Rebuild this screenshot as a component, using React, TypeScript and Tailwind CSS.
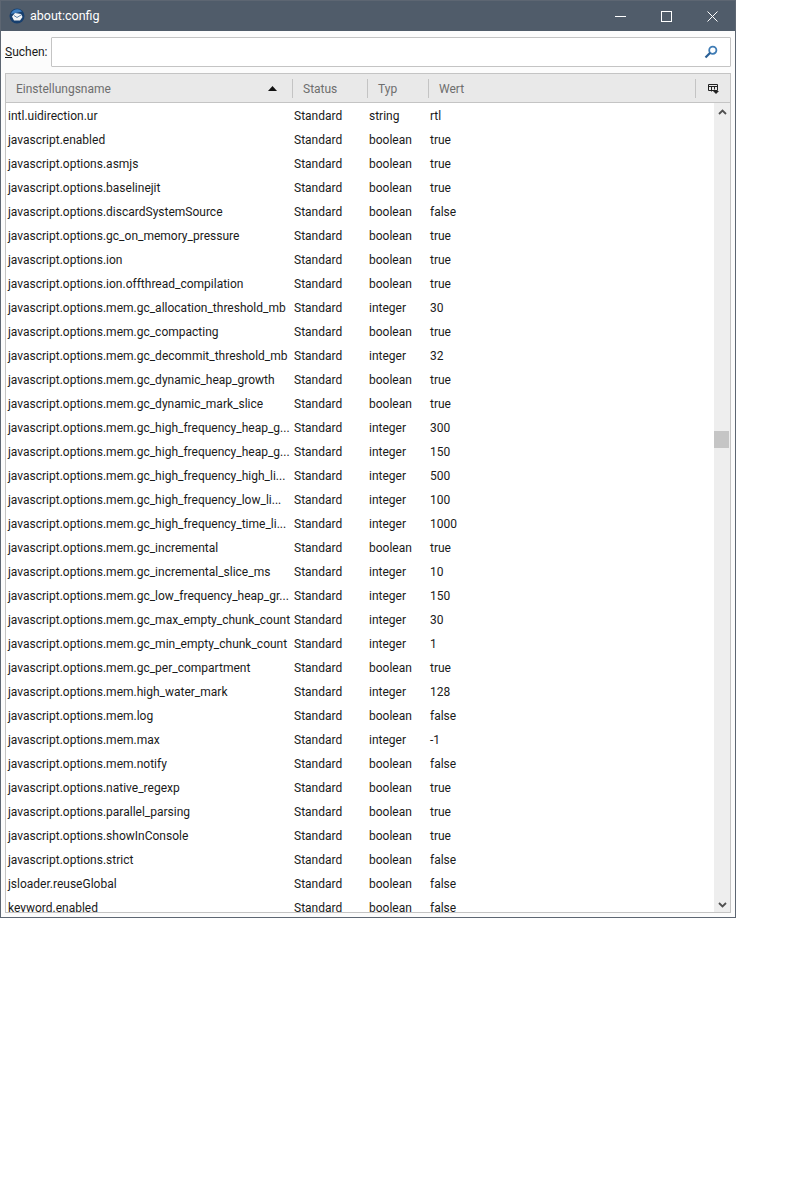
const rows: [string, string, string][] = [
  ["intl.uidirection.ur", "string", "rtl"],
  ["javascript.enabled", "boolean", "true"],
  ["javascript.options.asmjs", "boolean", "true"],
  ["javascript.options.baselinejit", "boolean", "true"],
  ["javascript.options.discardSystemSource", "boolean", "false"],
  ["javascript.options.gc_on_memory_pressure", "boolean", "true"],
  ["javascript.options.ion", "boolean", "true"],
  ["javascript.options.ion.offthread_compilation", "boolean", "true"],
  ["javascript.options.mem.gc_allocation_threshold_mb", "integer", "30"],
  ["javascript.options.mem.gc_compacting", "boolean", "true"],
  ["javascript.options.mem.gc_decommit_threshold_mb", "integer", "32"],
  ["javascript.options.mem.gc_dynamic_heap_growth", "boolean", "true"],
  ["javascript.options.mem.gc_dynamic_mark_slice", "boolean", "true"],
  ["javascript.options.mem.gc_high_frequency_heap_g...", "integer", "300"],
  ["javascript.options.mem.gc_high_frequency_heap_g...", "integer", "150"],
  ["javascript.options.mem.gc_high_frequency_high_li...", "integer", "500"],
  ["javascript.options.mem.gc_high_frequency_low_li...", "integer", "100"],
  ["javascript.options.mem.gc_high_frequency_time_li...", "integer", "1000"],
  ["javascript.options.mem.gc_incremental", "boolean", "true"],
  ["javascript.options.mem.gc_incremental_slice_ms", "integer", "10"],
  ["javascript.options.mem.gc_low_frequency_heap_gr...", "integer", "150"],
  ["javascript.options.mem.gc_max_empty_chunk_count", "integer", "30"],
  ["javascript.options.mem.gc_min_empty_chunk_count", "integer", "1"],
  ["javascript.options.mem.gc_per_compartment", "boolean", "true"],
  ["javascript.options.mem.high_water_mark", "integer", "128"],
  ["javascript.options.mem.log", "boolean", "false"],
  ["javascript.options.mem.max", "integer", "-1"],
  ["javascript.options.mem.notify", "boolean", "false"],
  ["javascript.options.native_regexp", "boolean", "true"],
  ["javascript.options.parallel_parsing", "boolean", "true"],
  ["javascript.options.showInConsole", "boolean", "true"],
  ["javascript.options.strict", "boolean", "false"],
  ["jsloader.reuseGlobal", "boolean", "false"],
  ["keyword.enabled", "boolean", "false"],
];

const App = () => {
  return (
    <div className="w-[736px] h-[918px] bg-white border border-[#5d6672] flex flex-col font-['Roboto','Noto_Sans',sans-serif] text-[12px] text-[#1a1a1a]">
      {/* title bar */}
      <div className="h-[30px] shrink-0 bg-[#505c6a] flex items-center text-white">
        <svg width="16" height="16" viewBox="0 0 16 16" className="ml-[8px]">
          <circle cx="8" cy="8" r="7.5" fill="#173f6e" />
          <path d="M2 6a6.5 6.5 0 0 1 11-2.5L9 4.5Z" fill="#3f7fc0" />
          <path d="M3 8.5l3-3.5 6 1 1.5 3-2.5 3.5H5Z" fill="#f2f4f6" />
          <path d="M5 7.5l3 2 4-2.5" stroke="#5a7ea5" strokeWidth="1" fill="none" />
        </svg>
        <span className="ml-[5px] text-[12.5px]">about:config</span>
        <div className="ml-auto flex items-center">
          <div className="w-[46px] flex justify-center">
            <svg width="11" height="11" viewBox="0 0 11 11"><path d="M0 5.5h11" stroke="#fff" /></svg>
          </div>
          <div className="w-[46px] flex justify-center">
            <svg width="11" height="11" viewBox="0 0 11 11"><rect x=".5" y=".5" width="10" height="10" fill="none" stroke="#fff" /></svg>
          </div>
          <div className="w-[46px] flex justify-center">
            <svg width="11" height="11" viewBox="0 0 11 11"><path d="M.5.5l10 10M10.5.5l-10 10" stroke="#fff" /></svg>
          </div>
        </div>
      </div>

      <div className="flex-1 min-h-0 bg-[#fcfcfc] px-1 pt-[6px] pb-1 flex flex-col">
        {/* search */}
        <div className="flex items-center h-[30px] shrink-0">
          <span className="w-[46px]"><span className="underline">S</span>uchen:</span>
          <div className="flex-1 h-[30px] bg-white border border-[#c4c4c4] rounded-[1px] flex items-center justify-end pr-[12px]">
            <svg width="14" height="14" viewBox="0 0 14 14">
              <circle cx="8.8" cy="5.2" r="3.6" fill="none" stroke="#3f7cb5" strokeWidth="1.8" />
              <path d="M6.2 7.8L1.5 12.5" stroke="#2a5f95" strokeWidth="2.2" />
            </svg>
          </div>
        </div>

        {/* table */}
        <div className="mt-[6px] flex-1 min-h-0 border border-[#c4c4c4] flex flex-col overflow-hidden bg-white">
          <div className="h-[29px] shrink-0 bg-[#e9e9e9] border-b border-[#c4c4c4] flex items-center pt-[1px] text-[#6e6e6e]">
            <div className="w-[287px] h-[19px] shrink-0 border-r border-[#c4c4c4] flex items-center justify-between pl-[10px] pr-[15px]">
              <span>Einstellungsname</span>
              <svg width="9" height="5" viewBox="0 0 9 5"><path d="M4.5 0L9 5H0Z" fill="#111" /></svg>
            </div>
            <div className="w-[75px] h-[19px] shrink-0 border-r border-[#c4c4c4] flex items-center pl-[10px]">Status</div>
            <div className="w-[61px] h-[19px] shrink-0 border-r border-[#c4c4c4] flex items-center pl-[10px]">Typ</div>
            <div className="w-[267px] h-[19px] shrink-0 border-r border-[#c4c4c4] flex items-center pl-[10px]">Wert</div>
            <div className="flex-1 flex justify-center">
              <svg width="11" height="11" viewBox="0 0 11 11">
                <path d="M.5 1.5h9v6h-9zM.5 3.5h9M3.5 3.5v5M6.5 3.5v3" fill="none" stroke="#222" />
                <path d="M5 8h6l-3 3Z" fill="#222" />
              </svg>
            </div>
          </div>
          <div className="flex-1 min-h-0 flex">
            <div className="flex-1 min-w-0 overflow-hidden pt-[1px]">
              {rows.map(([name, type, value], i) => (
                <div key={i} className="h-[24px] flex items-center whitespace-nowrap">
                  <div className="w-[288px] shrink-0 pl-[2px] overflow-hidden">{name}</div>
                  <div className="w-[75px] shrink-0">Standard</div>
                  <div className="w-[61px] shrink-0">{type}</div>
                  <div>{value}</div>
                </div>
              ))}
            </div>
            {/* scrollbar */}
            <div className="w-[16px] shrink-0 bg-[#eeeeee] flex flex-col items-center justify-between pt-[6px] pb-[4px]">
              <svg width="9" height="6" viewBox="0 0 9 6"><path d="M1 5l3.5-3.5L8 5" fill="none" stroke="#505050" strokeWidth="1.8" /></svg>
              <div className="w-[15px] h-[17px] bg-[#c5c5c5] mb-[138px] self-start" />
              <svg width="9" height="6" viewBox="0 0 9 6"><path d="M1 1l3.5 3.5L8 1" fill="none" stroke="#505050" strokeWidth="1.8" /></svg>
            </div>
          </div>
        </div>
      </div>
    </div>
  );
};

export default App;
